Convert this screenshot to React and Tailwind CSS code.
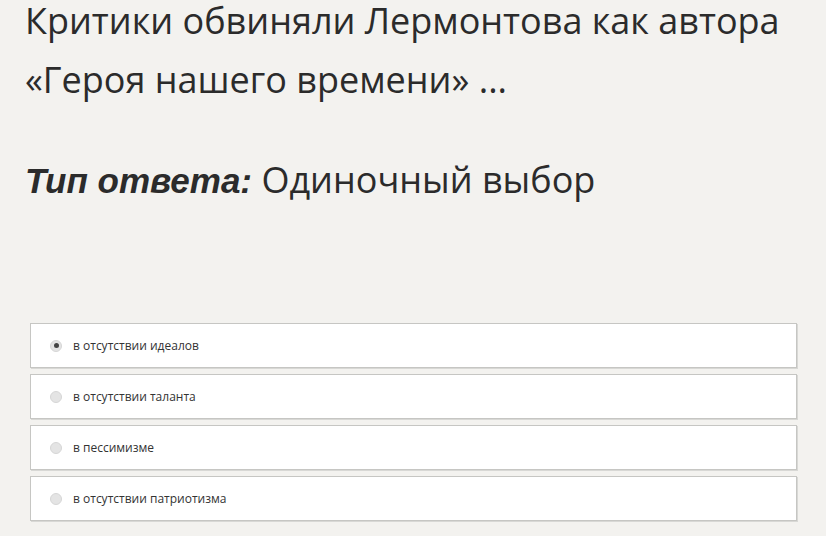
import React from "react";

const options = [
  { id: 1, text: "в отсутствии идеалов", checked: true },
  { id: 2, text: "в отсутствии таланта", checked: false },
  { id: 3, text: "в пессимизме", checked: false },
  { id: 4, text: "в отсутствии патриотизма", checked: false },
];

const Radio = ({ checked }) => (
  <span className="w-[12px] h-[12px] rounded-full bg-[#e4e4e4] border border-[#d6d6d6] flex items-center justify-center shrink-0">
    {checked && <span className="w-[5px] h-[5px] rounded-full bg-[#444]" />}
  </span>
);

export default function App() {
  return (
    <div
      className="w-[826px] h-[536px] bg-[#f3f2ef] overflow-hidden text-[#2b2b2b]"
      style={{ fontFamily: '"Open Sans", "Noto Sans", sans-serif' }}
    >
      <div className="pl-[25px] pt-[1px]">
        <h1 className="text-[36px] leading-[40px] font-normal">
          <div>Критики обвиняли Лермонтова как автора</div>
          <div className="mt-[19px]">«Героя нашего времени» ...</div>
        </h1>
        <p className="mt-[58px] text-[36px] leading-[44px]">
          <span
            className="font-bold italic text-[35px]"
            style={{ fontFamily: '"Liberation Sans", Arial, sans-serif' }}
          >
            Тип ответа:
          </span>{" "}
          Одиночный выбор
        </p>
      </div>

      {/* Answer options */}
      <div className="mt-[120px] ml-[30px] w-[767px] flex flex-col gap-[6px]">
        {options.map((opt) => (
          <label
            key={opt.id}
            className="h-[45px] bg-white border border-[#c6c6c3] shadow-[1px_1px_0_#d8d8d5] flex items-center gap-[11px] pl-[19px]"
          >
            <Radio checked={opt.checked} />
            <span className="text-[12px] text-[#333]">{opt.text}</span>
          </label>
        ))}
      </div>
    </div>
  );
}
